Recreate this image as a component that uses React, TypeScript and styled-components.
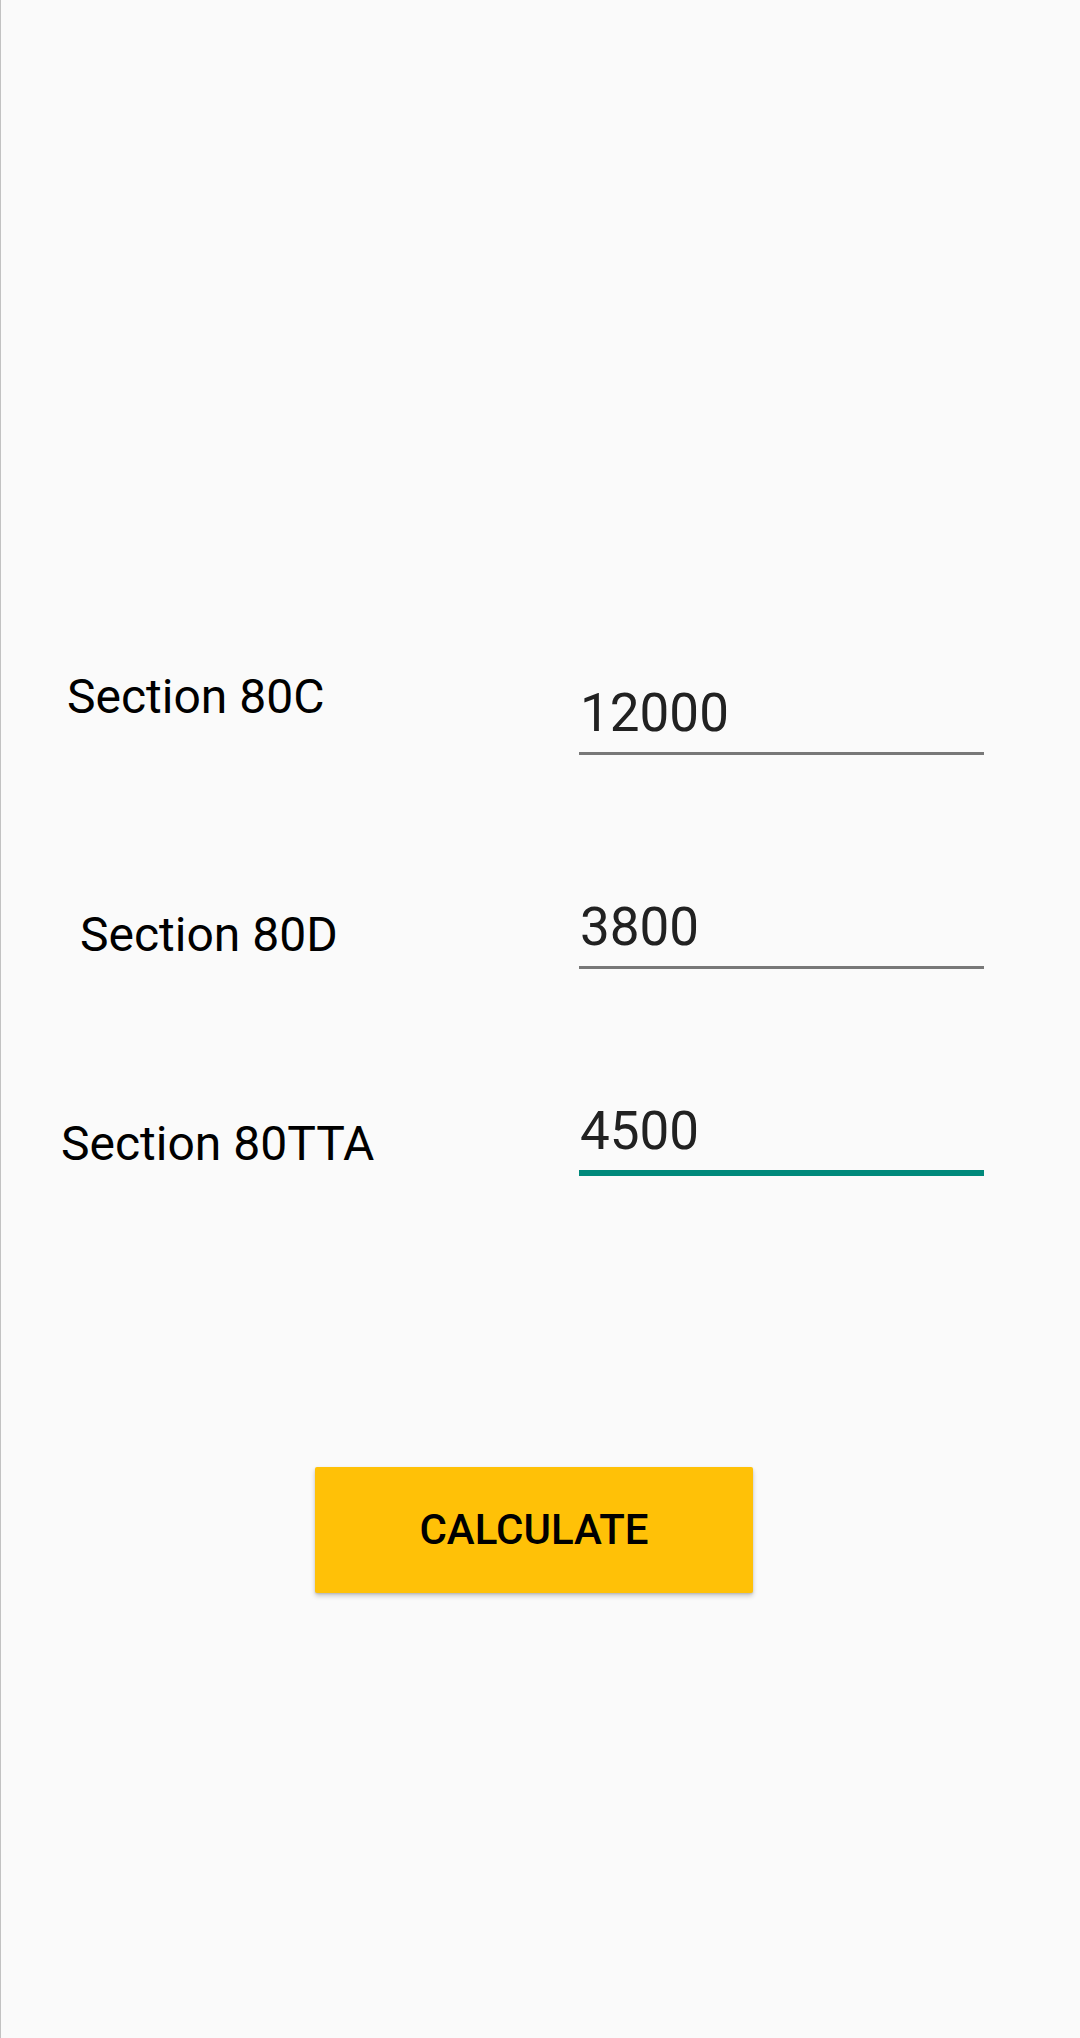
import React from "react";
import styled, { createGlobalStyle } from "styled-components";

const GlobalStyle = createGlobalStyle`
  html, body {
    margin: 0;
    padding: 0;
    background: #fafafa;
  }
  body {
    font-family: Roboto, "Noto Sans", "Liberation Sans", sans-serif;
  }
`;

const Screen = styled.div`
  box-sizing: border-box;
  min-height: 2038px;
  width: 1080px;
  background: #fafafa;
  border-left: 1px solid #c2c2c2;
  padding-top: 668.5px;
  display: flex;
  flex-direction: column;
`;

const Row = styled.div<{ $top: number }>`
  display: grid;
  grid-template-columns: 578px 405px;
  align-items: start;
  margin-top: ${(p) => p.$top}px;
`;

const Label = styled.div<{ $left: number; $down: number }>`
  font-family: Roboto, "Noto Sans", sans-serif;
  font-size: 48px;
  line-height: 56px;
  color: #000;
  padding-left: ${(p) => p.$left}px;
  margin-top: ${(p) => p.$down}px;
  white-space: nowrap;
`;

const Field = styled.input<{ $down: number; $focused?: boolean }>`
  box-sizing: content-box;
  display: block;
  width: 404px;
  height: 63px;
  margin: ${(p) => p.$down}px 0 0 0;
  padding: 0 0 7px 1px;
  border: none;
  border-radius: 0;
  border-bottom: ${(p) => (p.$focused ? "6px solid #00897b" : "3px solid #787878")};
  background: transparent;
  outline: none;
  font-family: Roboto, "Noto Sans", sans-serif;
  font-size: 53px;
  line-height: 63px;
  color: #212121;
`;

const ButtonRow = styled.div`
  display: flex;
  padding-left: 314px;
  margin-top: 291px;
`;

const CalcButton = styled.button`
  width: 438px;
  height: 126px;
  border: none;
  border-radius: 2px;
  background: #ffc107;
  box-shadow: 0 3px 5px rgba(0, 0, 0, 0.2), 0 1px 2px rgba(0, 0, 0, 0.12);
  font-family: Roboto, "Noto Sans", sans-serif;
  font-weight: 500;
  font-size: 42px;
  color: #000;
  text-transform: uppercase;
  padding: 0;
  cursor: pointer;
`;

const rows = [
  { label: "Section 80C", value: "12000", left: 66, top: 0, labelDown: 0, fieldDown: 13 },
  { label: "Section 80D", value: "3800", left: 79, top: 141, labelDown: 11, fieldDown: 0 },
  { label: "Section 80TTA", value: "4500", left: 60, top: 131, labelDown: 16, fieldDown: 0, focused: true },
];

export default function App() {
  return (
    <>
      <GlobalStyle />
      <Screen>
        {rows.map((r) => (
          <Row key={r.label} $top={r.top}>
            <Label $left={r.left} $down={r.labelDown}>
              {r.label}
            </Label>
            <Field
              $down={r.fieldDown}
              $focused={r.focused}
              defaultValue={r.value}
              inputMode="numeric"
            />
          </Row>
        ))}
        <ButtonRow>
          <CalcButton>Calculate</CalcButton>
        </ButtonRow>
      </Screen>
    </>
  );
}
